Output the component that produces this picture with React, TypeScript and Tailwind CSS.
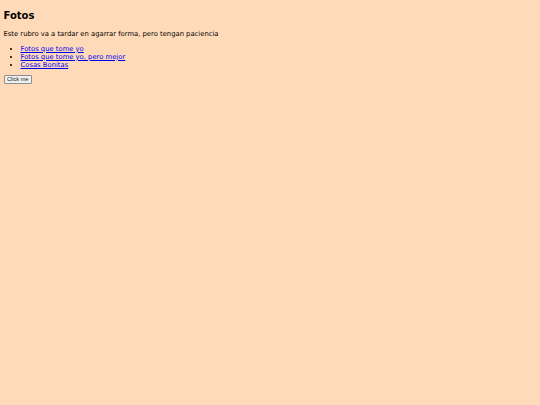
export default function App() {
  const links = ["Fotos que tome yo", "Fotos que tome yo, pero mejor", "Cosas Bonitas"];

  return (
    <div className="min-h-[405px] bg-[#ffdab9] px-[3.5px] pt-px pb-1 text-black font-['DejaVu_Sans',sans-serif]">
      <h1 className="mt-[9px] mb-[7.6px] text-[10px] font-bold leading-[12px]">Fotos</h1>
      <p className="my-0 text-[6.8px] leading-[8px]">
        Este rubro va a tardar en agarrar forma, pero tengan paciencia
      </p>
      <ul className="mt-[7px] mb-[6.4px] list-disc pl-[17px] text-[6.8px] leading-[8px]">
        {links.map((l) => (
          <li key={l}>
            <a href="#" className="text-[#0000ee] underline">
              {l}
            </a>
          </li>
        ))}
      </ul>
      <button
        type="button"
        className="block h-[9px] rounded-[1px] border border-[#8f8f8f] bg-[#efefef] px-[2.5px] text-[5.6px] leading-[7px] text-[#222] font-['Liberation_Sans',sans-serif]"
      >
        Click me
      </button>
    </div>
  );
}
